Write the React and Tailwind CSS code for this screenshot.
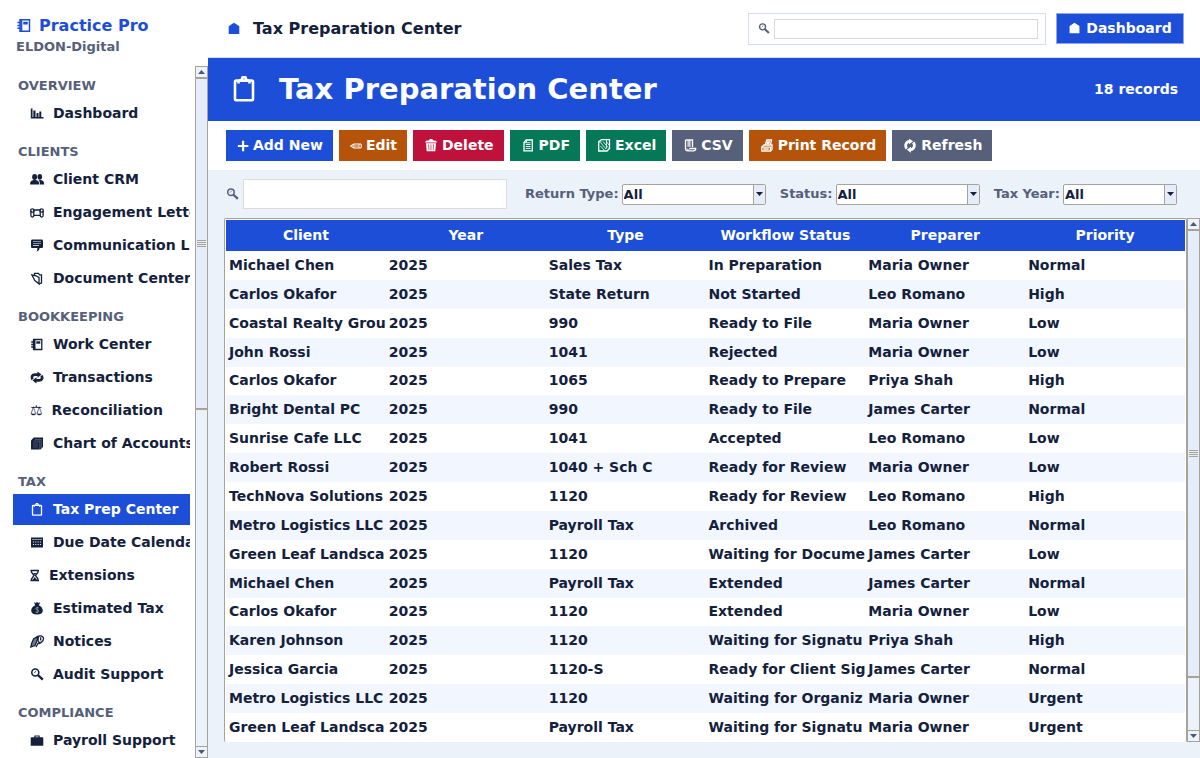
const NAV = [
  { title: "OVERVIEW", items: [["chart", "Dashboard"]] },
  { title: "CLIENTS", items: [["people", "Client CRM"], ["scroll", "Engagement Letters"], ["chat", "Communication Log"], ["folder", "Document Center"]] },
  { title: "BOOKKEEPING", items: [["ledger", "Work Center"], ["repeat", "Transactions"], ["scales", "Reconciliation"], ["books", "Chart of Accounts"]] },
  { title: "TAX", items: [["clipboard", "Tax Prep Center"], ["calendar", "Due Date Calendar"], ["hourglass", "Extensions"], ["bag", "Estimated Tax"], ["mail", "Notices"], ["search", "Audit Support"]] },
  { title: "COMPLIANCE", items: [["briefcase", "Payroll Support"]] },
];

const ACTIONS = [
  ["plus", "Add New", "bg-[#1d4ed8]"],
  ["pencil", "Edit", "bg-[#b45309]"],
  ["trash", "Delete", "bg-[#be123c]"],
  ["page", "PDF", "bg-[#047857]"],
  ["sheets", "Excel", "bg-[#047857]"],
  ["curl", "CSV", "bg-[#56607a]"],
  ["printer", "Print Record", "bg-[#b45309]"],
  ["refresh", "Refresh", "bg-[#56607a]"],
];

const COLUMNS = ["Client", "Year", "Type", "Workflow Status", "Preparer", "Priority"];

const ROWS = [
  ["Michael Chen", "2025", "Sales Tax", "In Preparation", "Maria Owner", "Normal"],
  ["Carlos Okafor", "2025", "State Return", "Not Started", "Leo Romano", "High"],
  ["Coastal Realty Grou", "2025", "990", "Ready to File", "Maria Owner", "Low"],
  ["John Rossi", "2025", "1041", "Rejected", "Maria Owner", "Low"],
  ["Carlos Okafor", "2025", "1065", "Ready to Prepare", "Priya Shah", "High"],
  ["Bright Dental PC", "2025", "990", "Ready to File", "James Carter", "Normal"],
  ["Sunrise Cafe LLC", "2025", "1041", "Accepted", "Leo Romano", "Low"],
  ["Robert Rossi", "2025", "1040 + Sch C", "Ready for Review", "Maria Owner", "Low"],
  ["TechNova Solutions", "2025", "1120", "Ready for Review", "Leo Romano", "High"],
  ["Metro Logistics LLC", "2025", "Payroll Tax", "Archived", "Leo Romano", "Normal"],
  ["Green Leaf Landsca", "2025", "1120", "Waiting for Docume", "James Carter", "Low"],
  ["Michael Chen", "2025", "Payroll Tax", "Extended", "James Carter", "Normal"],
  ["Carlos Okafor", "2025", "1120", "Extended", "Maria Owner", "Low"],
  ["Karen Johnson", "2025", "1120", "Waiting for Signatu", "Priya Shah", "High"],
  ["Jessica Garcia", "2025", "1120-S", "Ready for Client Sig", "James Carter", "Normal"],
  ["Metro Logistics LLC", "2025", "1120", "Waiting for Organiz", "Maria Owner", "Urgent"],
  ["Green Leaf Landsca", "2025", "Payroll Tax", "Waiting for Signatu", "Maria Owner", "Urgent"],
];

const line = { fill: "none", stroke: "currentColor", strokeWidth: 1.3 };

const SHAPES = {
  chart: <><path d="M.8 2.500v10h12.700v-1.500H2.500V2.500z" /><path d="M3.300 4.500h2.200V12H3.300zM6.500 7h2v5h-2zM9.300 5.500h2V12h-2z" /></>,
  people: <><ellipse cx="4.600" cy="5" rx="2.500" ry="3" /><ellipse cx="9.800" cy="4.800" rx="2.300" ry="2.900" /><path d="M0 12.500c0-3 1.300-4 3.500-4.500h2.300C8 8.500 9.300 9.500 9.300 12.500z" /><path d="M10 12.500c0-2-.4-3.300-1.300-4.300l.7-.2h1.500c2 .5 3.300 1.500 3.300 4.500z" /></>,
  scroll: <g {...line}><path d="M3 5h8M3.800 10.300h6.400" /><ellipse cx="2.400" cy="5.500" rx="1.700" ry="1.700" /><ellipse cx="11.600" cy="5.500" rx="1.700" ry="1.700" /><path d="M.9 6v4.500c0 2 2.900 2 2.900 0V6M13.100 6v4.500c0 2-2.900 2-2.900 0V6" /></g>,
  chat: <path fillRule="evenodd" d="M2.500 1.500h9c1 0 1.500.6 1.500 1.500v5.500c0 1-.5 1.500-1.500 1.500H9.500c0 1.800-.8 2.800-3 3.500.7-1 .9-2 .8-3.500H2.500C1.500 10 1 9.500 1 8.500V3c0-.9.500-1.500 1.500-1.500zM3 3.500v.6h8v-.6zm0 1.900V6h8v-.6zm0 1.900v.6h6v-.6z" />,
  folder: <g {...line}><path d="M4.500 4.800V2.300h4l1 1.500h2V12L8.800 12.800" /><path d="M1.800 3.800l4.200 1 3 1.700v6.300L4.800 9.500z" /></g>,
  ledger: <><g {...line}><path d="M3.500 2.500h8.300v10H3.500zM1.200 5h2M1.200 7.500h2M1.200 10h2" /><path d="M4.600 2.500v10" strokeWidth="1.800" /></g><path d="M6.300 4.300h4v2.400h-4z" /></>,
  repeat: <g fill="none" stroke="currentColor" strokeWidth="2.700"><path d="M2.400 9.500C1 6.500 2.300 4.700 5 4.700h3" /><path d="M11.600 5.500c1.400 3 .1 4.800-2.600 4.800H6" /><path d="M7.500 1.500L11.500 4.500 7.500 7.700zM6.500 7.300L2.500 10.500l4 3z" fill="currentColor" stroke="none" /></g>,
  books: <><path d="M3.800 1.500H13V11l-2.500 2.500H1V4.500z" /><path d="M3.500 5h6.300v8.500M5 3.500h6.200V12" fill="none" stroke="#fff" strokeOpacity=".4" strokeWidth=".6" /><path d="M3 7h5M3 9h5M3 11h5" stroke="#fff" strokeOpacity=".35" strokeWidth=".6" /></>,
  clipboard: <g {...line}><rect x="2.500" y="3.300" width="9" height="9.800" rx=".6" /><path d="M4.300 4.700V3.600L5.800 3 6.300 1.600h1.400L8.200 3l1.500.6v1.100" /></g>,
  calendar: <path fillRule="evenodd" d="M1 2.500h12v10H1zM2 4.600v.5h10v-.5zM3 6.500v1h1v-1zm2.300 0v1h1v-1zm2.300 0v1h1v-1zm2.300 0v1h1v-1zM3 9v1h1V9zm2.300 0v1h1V9zm2.300 0v1h1V9zm2.300 0v1h1V9z" />,
  hourglass: <><g {...line}><path d="M.5 2.500h8.500M.5 12.500h8.500" strokeWidth="1.500" /><path d="M1.500 2.500v1.700L4 7.500 1.500 11v1.500M8 2.500v1.700L5.500 7.500 8 11v1.500" /></g><path d="M3 5h3.500L4.800 7zM4.800 9l2.200 3H2.600z" /></>,
  bag: <><path d="M4 1.200l1.600.8L7 1l1.500 1 1.800-.8-1.500 3c2.500 1 4 3 4 5.300 0 2.800-2 4-5.800 4s-5.800-1.200-5.800-4c0-2.300 1.500-4.300 4-5.300z" /><path d="M8.800 7C7.500 6.300 5.800 6.500 5.800 7.700s3 1 3 2.300-1.800 1.800-3.300 1M7.200 5.800v6.500" fill="none" stroke="#fff" strokeOpacity=".55" strokeWidth=".7" /></>,
  mail: <g {...line}><path d="M.8 13l1-4 2-4.500L8.500 3 6.500 8 5 11.500z" fill="currentColor" fillOpacity=".6" /><path d="M5.500 4C8 1 13.300 1 13.500 4.500c0 3-3.500 5-5.500 5L6 13M8.500 3C7.500 5.500 8 8.500 9.800 8.500M10.700 3.300v3.200" /></g>,
  search: <g fill="none" stroke="currentColor"><circle cx="5.300" cy="5.500" r="3.500" strokeWidth="1.600" /><path d="M4.300 6l1.800-2" strokeWidth=".8" /><path d="M7.800 8l5 4.700" strokeWidth="2.400" /></g>,
  briefcase: <path fillRule="evenodd" d="M4.300 4.200V2.500h5.400v1.700H12c.9 0 1.300.3 1.300 1v7.600H.7V5.200c0-.7.400-1 1.300-1zm1.200 0h3v-.7h-3z" />,
  home: <path d="M7 1.800l2 1.300L12.300 5.300V13H1.700V5.300L5 3.100z" />,
  plus: <path d="M5.800 2h2.600v4.800h4.800v2.500H8.400V14H5.800V9.300H1V6.800h4.800z" />,
  pencil: <g {...line} strokeWidth="1.200"><path d="M.8 8l3.700-2.300h8c1 0 1 4.600 0 4.600h-8z" /><path d="M4.500 5.700v4.600M10.500 5.700v4.600M4.500 8h6" strokeWidth=".9" /></g>,
  trash: <path fillRule="evenodd" d="M5.500 1h3v1.200L12 2.700 13 4.500H1l1-1.800 3.500-.5zM2 5.200h10L11.300 13.300H2.700zM4.300 6.500l.4 5.500h.6l-.3-5.500zm2.300 0V12h.7V6.500zm2.500 0L8.800 12h.6l.4-5.500z" />,
  page: <g {...line}><path d="M5 2h6.300v10.800H3V4.500z" /><path d="M3 4.700h2.500V2M4.800 6.500h4.700M4.800 8.500h4.700M4.800 10.500h4.700M5.800 4.800h3.700" strokeWidth=".9" /></g>,
  sheets: <g {...line}><path d="M4.500 1.700H12.500v8.800L10 13H1.700V3.500z" /><path d="M3.500 4.500L9 11M3.500 8l3.500 4M6 3.500l5 6M9 3l3 4M4.500 3l-2 2M9.500 2v8.500" strokeWidth=".8" /></g>,
  curl: <g {...line}><path d="M2.500 2H9.500V9M2.500 2v8.500c0 1.800 1 2.300 2.500 2.300h5.500c1.500 0 2.300-.8 2.200-2.300H6.500" /><path d="M6.500 10.500c0 2-2.500 1.500-2.500 0M4 4h4M4 6h4M4 8h4M6 2v6.500" strokeWidth=".9" /></g>,
  printer: <g {...line}><path d="M5.200 7L6.800 2h4.700L10.500 7M1.800 9L4 7h8v4.500L10.500 13H1.800z" /><path d="M1.800 9.200h8.700v3.300M3.300 11h5.500M7 4h3M6.500 5.500h3" /></g>,
  refresh: <><path d="M3.800 10.500A4.300 4.300 0 0 1 6.500 3.300M10.200 4.500A4.300 4.300 0 0 1 7.500 11.700" fill="none" stroke="currentColor" strokeWidth="2.700" /><path d="M6 .8L10.200 3.300 6 6.300zM8 8.700v6L3.800 11.700z" /></>,
};

function Icon({ name, className = "" }) {
  return (
    <svg aria-hidden="true" viewBox={name === "hourglass" ? "0 1 10 14" : "0 1 14 14"} fill="currentColor" className={`shrink-0 overflow-visible ${className}`}>
      {SHAPES[name]}
    </svg>
  );
}

function NavIcon({ name }) {
  if (name === "scales") return <span aria-hidden="true" className="mr-[9px] font-normal">⚖</span>;
  return <Icon name={name} className={name === "hourglass" ? "mr-[9px] h-[14px] w-[10px]" : "mr-[9px] h-[14px] w-[14px]"} />;
}

function ScrollBar({ thumb }) {
  return (
    <div aria-hidden="true" className="flex w-[13px] shrink-0 flex-col border border-[#a8a297] bg-[#ecf2f9]">
      <div className="flex h-[11px] shrink-0 items-center justify-center border-b border-[#a8a297] bg-[#eef3fb]">
        <svg width="7" height="4" viewBox="0 0 7 4"><path d="M0 4L3.500 0L7 4z" fill="#4a5878" /></svg>
      </div>
      <div className={`flex shrink-0 flex-col items-center justify-center gap-px border-b-2 border-t border-[#a8a297] bg-[#e6edfa] ${thumb}`}>
        <i className="h-px w-[9px] bg-[#a8a297]" />
        <i className="h-px w-[9px] bg-[#a8a297]" />
        <i className="h-px w-[9px] bg-[#a8a297]" />
        <i className="h-px w-[9px] bg-[#a8a297]" />
      </div>
      <div className="flex-1" />
      <div className="flex h-[11px] shrink-0 items-center justify-center border-t border-[#a8a297] bg-[#eef3fb]">
        <svg width="7" height="4" viewBox="0 0 7 4"><path d="M0 0L3.500 4L7 0z" fill="#4a5878" /></svg>
      </div>
    </div>
  );
}

function Combo({ id, label, width }) {
  return (
    <div className="flex items-center gap-[3px]">
      <label htmlFor={id} className="text-[13px] text-[#56607a]">{label}</label>
      <div className={`relative h-[21px] ${width}`}>
        <select id={id} className="h-full w-full appearance-none rounded-[2px] border border-[#a8a297] bg-white pl-px text-[13px] leading-[19px] text-[#14213d]">
          <option>All</option>
        </select>
        <span className="pointer-events-none absolute inset-y-px right-px flex w-3 items-center justify-center border-l border-[#a8a297] bg-[#e6edfa]">
          <svg width="7" height="4" viewBox="0 0 7 4"><path d="M0 0L3.500 4L7 0z" fill="#14213d" /></svg>
        </span>
      </div>
    </div>
  );
}

export default function App() {
  return (
    <div className="flex h-screen min-h-[600px] overflow-hidden bg-[#ecf2f9] font-['DejaVu_Sans',sans-serif] text-[14px] font-bold text-[#14213d]">
      <aside className="flex w-[208px] shrink-0 flex-col bg-white">
        <div className="h-[66px] shrink-0 px-4 pt-4">
          <div className="flex h-5 items-center gap-[7px] text-[16px] text-[#1d4ed8]">
            <Icon name="ledger" className="h-4 w-4" />Practice Pro
          </div>
          <div className="text-[13px] leading-[22px] text-[#56607a]">ELDON-Digital</div>
        </div>
        <div className="flex min-h-0 flex-1">
          <nav className="min-w-0 flex-1 overflow-hidden pl-[13px] pt-2">
            {NAV.map((group) => (
              <section key={group.title} className="pb-[9px] pr-[5px]">
                <h2 className="h-6 pl-[5px] pt-0.5 text-[13px] leading-5 text-[#56607a]">{group.title}</h2>
                {group.items.map(([icon, label]) => (
                  <div key={label} className="h-[33px]">
                    <a href="#" className={`flex h-[31px] items-center overflow-hidden whitespace-nowrap pl-[17px] ${label === "Tax Prep Center" ? "bg-[#1d4ed8] text-white" : ""}`}>
                      <NavIcon name={icon} />{label}
                    </a>
                  </div>
                ))}
              </section>
            ))}
          </nav>
          <ScrollBar thumb="h-[332px]" />
        </div>
      </aside>

      <main className="flex min-w-0 flex-1 flex-col">
        <header className="flex h-[58px] shrink-0 items-center border-b border-[#d5def0] bg-white pl-[19px] pr-4">
          <Icon name="home" className="h-[14px] w-[14px] text-[#1d4ed8]" />
          <h1 className="ml-3 flex-1 text-[16px]">Tax Preparation Center</h1>
          <label className="flex h-8 w-[298px] items-center gap-1 border border-[#d5def0] pl-[9px] pr-[7px] text-[#56607a]">
            <Icon name="search" className="h-3 w-3" />
            <input aria-label="Search" className="h-5 min-w-0 flex-1 border border-[#d9d9d9] bg-white px-1" />
          </label>
          <button className="ml-[10px] flex h-[31px] w-32 items-center justify-center gap-[5px] border border-[#8fa8ee] bg-[#1d4ed8] text-white">
            <Icon name="home" className="h-[13px] w-[13px]" />Dashboard
          </button>
        </header>

        <div className="flex h-[63px] shrink-0 items-center bg-[#1d4ed8] px-[22px] text-white">
          <Icon name="clipboard" className="h-7 w-7" />
          <h2 className="ml-[21px] flex-1 text-[29px]">Tax Preparation Center</h2>
          <span>18 records</span>
        </div>

        <div className="flex h-[49px] shrink-0 items-center gap-1.5 bg-white pl-[18px]">
          {ACTIONS.map(([icon, label, bg]) => (
            <button key={label} className={`flex h-[31px] items-center gap-1 pl-[11px] pr-[10px] text-white ${bg}`}>
              <Icon name={icon} className={icon === "plus" || icon === "pencil" ? "h-3 w-3" : "h-[14px] w-[14px]"} />{label}
            </button>
          ))}
        </div>

        <div className="flex h-12 shrink-0 items-center pl-[18px] pr-[23px] text-[#56607a]">
          <label htmlFor="filter" aria-label="Filter records"><Icon name="search" className="h-[13px] w-[13px]" /></label>
          <input id="filter" className="ml-1 mr-[18px] h-[30px] w-[264px] border border-[#dcdcdc] bg-white px-2" />
          <div className="flex flex-1 justify-between">
            <Combo id="type" label="Return Type:" width="w-[144px]" />
            <Combo id="status" label="Status:" width="w-[144px]" />
            <Combo id="year" label="Tax Year:" width="w-[114px]" />
          </div>
        </div>

        <div className="mb-4 ml-4 flex min-h-0 flex-1">
          <div className="min-w-0 flex-1 overflow-hidden rounded-[2px] border border-b-0 border-[#a8a297] bg-white p-px pb-0">
            <table className="h-full w-full table-fixed border-collapse">
              <thead>
                <tr className="h-[31px] bg-[#1d4ed8] text-white">
                  {COLUMNS.map((c) => <th key={c} className="p-0">{c}</th>)}
                </tr>
              </thead>
              <tbody>
                {ROWS.map((row, i) => (
                  <tr key={i} className="bg-white even:bg-[#f2f6fe]">
                    {row.map((cell, j) => <td key={j} className="overflow-hidden whitespace-nowrap py-0 pl-[3px] pr-0">{cell}</td>)}
                  </tr>
                ))}
              </tbody>
            </table>
          </div>
          <ScrollBar thumb="h-[448px]" />
        </div>
      </main>
    </div>
  );
}
